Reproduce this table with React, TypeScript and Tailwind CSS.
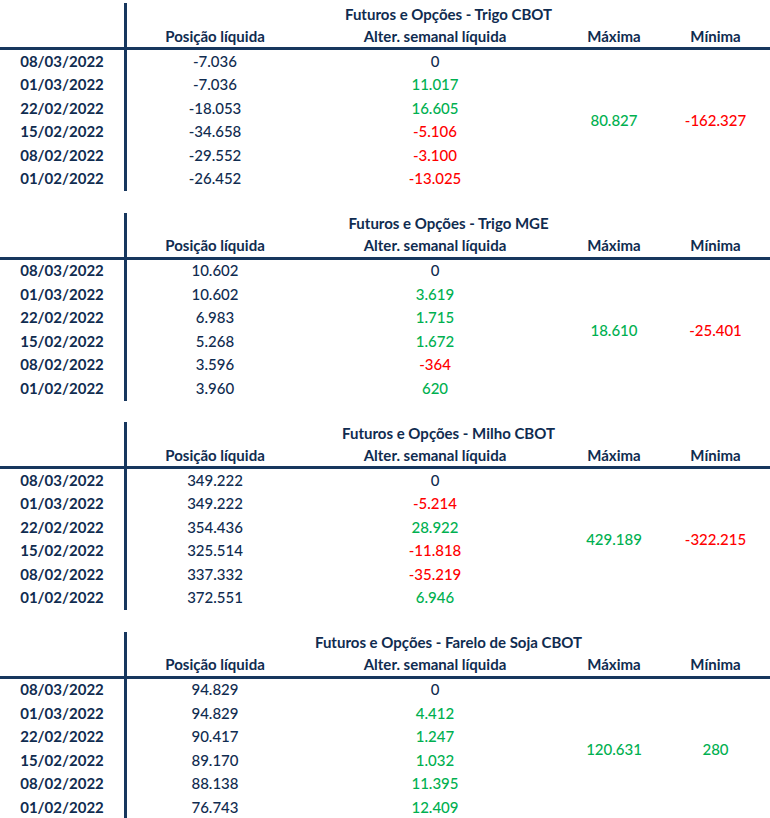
import React from "react";

type Row = { date: string; pos: string; chg: string };
type Table = { title: string; max: string; min: string; rows: Row[] };

const tables: Table[] = [
  {
    title: "Futuros e Opções - Trigo CBOT",
    max: "80.827",
    min: "-162.327",
    rows: [
      { date: "08/03/2022", pos: "-7.036", chg: "0" },
      { date: "01/03/2022", pos: "-7.036", chg: "11.017" },
      { date: "22/02/2022", pos: "-18.053", chg: "16.605" },
      { date: "15/02/2022", pos: "-34.658", chg: "-5.106" },
      { date: "08/02/2022", pos: "-29.552", chg: "-3.100" },
      { date: "01/02/2022", pos: "-26.452", chg: "-13.025" },
    ],
  },
  {
    title: "Futuros e Opções - Trigo MGE",
    max: "18.610",
    min: "-25.401",
    rows: [
      { date: "08/03/2022", pos: "10.602", chg: "0" },
      { date: "01/03/2022", pos: "10.602", chg: "3.619" },
      { date: "22/02/2022", pos: "6.983", chg: "1.715" },
      { date: "15/02/2022", pos: "5.268", chg: "1.672" },
      { date: "08/02/2022", pos: "3.596", chg: "-364" },
      { date: "01/02/2022", pos: "3.960", chg: "620" },
    ],
  },
  {
    title: "Futuros e Opções - Milho CBOT",
    max: "429.189",
    min: "-322.215",
    rows: [
      { date: "08/03/2022", pos: "349.222", chg: "0" },
      { date: "01/03/2022", pos: "349.222", chg: "-5.214" },
      { date: "22/02/2022", pos: "354.436", chg: "28.922" },
      { date: "15/02/2022", pos: "325.514", chg: "-11.818" },
      { date: "08/02/2022", pos: "337.332", chg: "-35.219" },
      { date: "01/02/2022", pos: "372.551", chg: "6.946" },
    ],
  },
  {
    title: "Futuros e Opções - Farelo de Soja CBOT",
    max: "120.631",
    min: "280",
    rows: [
      { date: "08/03/2022", pos: "94.829", chg: "0" },
      { date: "01/03/2022", pos: "94.829", chg: "4.412" },
      { date: "22/02/2022", pos: "90.417", chg: "1.247" },
      { date: "15/02/2022", pos: "89.170", chg: "1.032" },
      { date: "08/02/2022", pos: "88.138", chg: "11.395" },
      { date: "01/02/2022", pos: "76.743", chg: "12.409" },
    ],
  },
];

// excel-style colouring: zero stays navy, gains green, losses red
function tone(v: string) {
  if (v === "0") return "text-[#102c50]";
  return v.startsWith("-") ? "text-[#ff0000]" : "text-[#00b050]";
}

function CotTable({ t }: { t: Table }) {
  return (
    <div className="grid grid-cols-[124px_3px_176px_264px_94px_1fr] grid-rows-[22px_22px_3px_repeat(6,23.5px)] items-center text-center">
      <div className="col-start-2 row-start-1 row-end-10 self-stretch bg-[#17375e]" />
      <div className="col-start-3 col-end-7 row-start-1 font-bold">{t.title}</div>
      <div className="col-start-3 row-start-2 font-bold">Posição líquida</div>
      <div className="col-start-4 row-start-2 font-bold">Alter. semanal líquida</div>
      <div className="col-start-5 row-start-2 font-bold">Máxima</div>
      <div className="col-start-6 row-start-2 font-bold">Mínima</div>
      <div className="col-span-full row-start-3 self-stretch bg-[#17375e]" />
      {t.rows.map((r, i) => (
        <React.Fragment key={r.date}>
          <div className="col-start-1 font-bold -mt-px" style={{ gridRowStart: i + 4 }}>
            {r.date}
          </div>
          <div className="col-start-3 font-medium -mt-px" style={{ gridRowStart: i + 4 }}>
            {r.pos}
          </div>
          <div className={`col-start-4 font-medium -mt-px ${tone(r.chg)}`} style={{ gridRowStart: i + 4 }}>
            {r.chg}
          </div>
        </React.Fragment>
      ))}
      <div className={`col-start-5 row-start-4 row-end-10 font-medium ${tone(t.max)}`}>{t.max}</div>
      <div className={`col-start-6 row-start-4 row-end-10 font-medium ${tone(t.min)}`}>{t.min}</div>
    </div>
  );
}

export default function App() {
  return (
    <div className="w-[770px] h-[818px] overflow-hidden bg-white pt-[3px] flex flex-col gap-[21.5px] text-[15px] leading-none text-[#102c50] font-['Lato',sans-serif]">
      {tables.map((t) => (
        <CotTable key={t.title} t={t} />
      ))}
    </div>
  );
}
